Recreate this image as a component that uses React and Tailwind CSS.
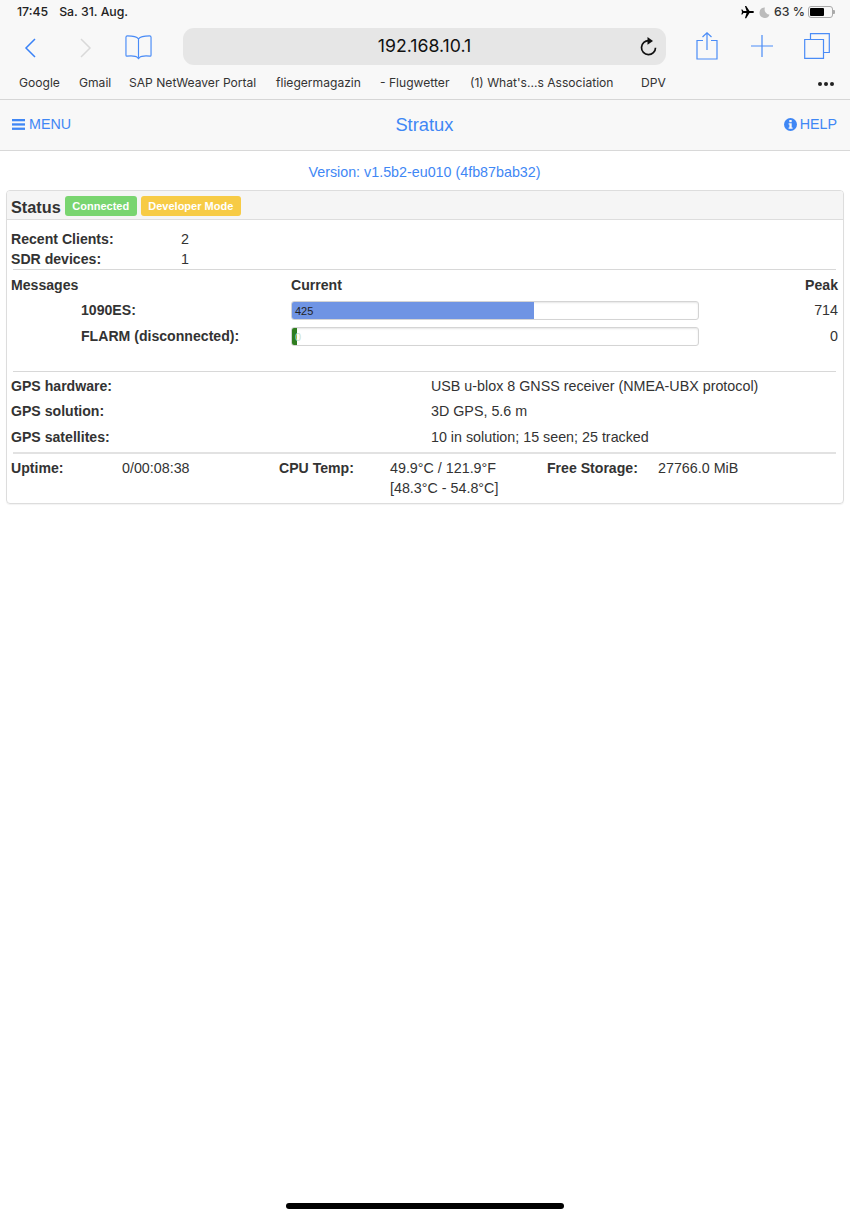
const bookmarks = [
  { label: "Google", w: "w-[39px]", ml: "ml-[19px]" },
  { label: "Gmail", w: "w-[31px]", ml: "ml-[21px]" },
  { label: "SAP NetWeaver Portal", w: "w-[128px]", ml: "ml-[19px]" },
  { label: "fliegermagazin", w: "w-[85px]", ml: "ml-[19px]" },
  { label: "- Flugwetter", w: "w-[71px]", ml: "ml-[19px]" },
  { label: "(1) What's...s Association", w: "w-[144px]", ml: "ml-[19px]" },
  { label: "DPV", w: "w-[24px]", ml: "ml-[27px]" },
];

function Bar({ fill, label, labelClass, width }) {
  return (
    <div className="relative w-[408px] h-[19px] bg-white border border-[#d4d4d4] rounded-[3px] shadow-[inset_0_1px_2px_rgba(0,0,0,0.1)] overflow-hidden">
      <div className={`h-full ${fill}`} style={{ width }} />
      <span className={`absolute left-[3px] top-[1px] text-[11px] leading-[16px] ${labelClass}`}>{label}</span>
    </div>
  );
}

export default function App() {
  return (
    <div className="w-[850px] h-[1217px] bg-white text-[#333] text-[14.3px] leading-[20px] relative overflow-hidden font-['Liberation_Sans',sans-serif]">
      {/* Safari chrome */}
      <div className="h-[100px] bg-[#f8f8f8] border-b border-[#d6d6d6] font-['Inter',sans-serif]">
        <div className="h-[26px] flex items-center pl-[17px] pr-[17px] pb-[2px] text-[12.300px] font-medium text-[#222]">
          <span>17:45</span>
          <span className="ml-[11px]">Sa. 31. Aug.</span>
          <div className="ml-auto flex items-center">
            <svg width="15" height="14" viewBox="0 0 24 24" fill="#000">
              <path d="M23 12c0-1-1-1.700-2.300-1.700h-5.300L9.800 1.500H7.600l2.800 8.800H5L3.200 7.800H1.400L2.600 12 1.400 16.200h1.800L5 13.700h5.400l-2.800 8.800h2.200l5.600-8.800h5.300C22 13.700 23 13 23 12z" />
            </svg>
            <svg className="ml-[4px]" width="11" height="11" viewBox="0 0 12 12" fill="#bbb">
              <path d="M6.500.5A5.700 5.700 0 1 0 11.500 8.500 6 6 0 0 1 6.500.5z" />
            </svg>
            <span className="ml-[4px] text-[#333] w-[30px] whitespace-nowrap">63 %</span>
            <div className="ml-[4px] w-[25px] h-[12px] border border-[#aaa] rounded-[3px] p-[1px] relative">
              <div className="w-[14px] h-full bg-black rounded-[1px]" />
              <div className="absolute -right-[3px] top-[3px] w-[2px] h-[4px] bg-[#aaa] rounded-r-[1px]" />
            </div>
          </div>
        </div>

        <div className="h-[40px] flex items-center relative">
          <svg className="ml-[24px] mt-[4px]" width="14" height="22" viewBox="0 0 14 22" fill="none" stroke="#3a82f7" strokeWidth="1.500">
            <path d="M11 2 2 11l9 9" />
          </svg>
          <svg className="ml-[40px] mt-[4px]" width="14" height="22" viewBox="0 0 14 22" fill="none" stroke="#d9d9d9" strokeWidth="1.500">
            <path d="M3 2l9 9-9 9" />
          </svg>
          <svg className="ml-[33px] mt-[2px]" width="27" height="26" viewBox="0 0 28 26" fill="none" stroke="#4a8cf7" strokeWidth="1.200">
            <path d="M14 4.500C12 2 8 1.500 2.500 1.500c-1 0-1.500.5-1.500 1.500v18.500c0 .7.400 1 1 1C7 22 11 22 13 24l1 1 1-1c2-2 6-2 11-1.500.6 0 1-.3 1-1V3c0-1-.5-1.500-1.500-1.500C20 1.500 16 2 14 4.500zM14 4.500V24" />
          </svg>
          <div className="ml-[31px] w-[483px] h-[37px] rounded-[11px] bg-[#e6e6e6] flex items-center justify-center relative">
            <span className="text-[17.700px] text-[#111]">192.168.10.1</span>
            <svg className="absolute right-[8px] top-[8px]" width="20" height="21" viewBox="0 0 20 21" fill="none" stroke="#111" strokeWidth="1.700">
              <path d="M11 4.700a7 7 0 1 0 6.500 7" />
              <path d="M9.500 1 15 5l-5.500 3.800z" fill="#111" stroke="none" />
            </svg>
          </div>
          <svg className="ml-[30px]" width="22" height="28" viewBox="0 0 22 28" fill="none" stroke="#4a8cf7" strokeWidth="1.200">
            <path d="M7 8.500H1v18.500h20V8.500h-6M11 18V1M6.500 5 11 .8 15.500 5" />
          </svg>
          <svg className="ml-[33px]" width="22" height="22" viewBox="0 0 22 22" fill="none" stroke="#4a8cf7" strokeWidth="1.200">
            <path d="M0 11h22M11 0v22" />
          </svg>
          <svg className="ml-[31px]" width="26" height="26" viewBox="0 0 26 26" fill="none" stroke="#4a8cf7" strokeWidth="1.200">
            <path d="M.7 6.500h18.800v18.800H.7zM6.500 6V.7h18.800v18.800H20" />
          </svg>
        </div>

        <div className="h-[33px] pt-[1px] flex items-center text-[12.100px] text-[#333] relative">
          {bookmarks.map((b) => (
            <span key={b.label} className={`${b.w} ${b.ml} whitespace-nowrap`}>{b.label}</span>
          ))}
          <div className="absolute left-[818px] top-[16px] flex gap-[2px]">
            <i className="block w-[4px] h-[4px] rounded-full bg-[#222]" />
            <i className="block w-[4px] h-[4px] rounded-full bg-[#222]" />
            <i className="block w-[4px] h-[4px] rounded-full bg-[#222]" />
          </div>
        </div>
      </div>

      {/* Navbar */}
      <div className="h-[51px] bg-[#f8f8f8] border-b border-[#d8d8d8] flex items-center justify-between pl-[12px] pr-[13px] text-[#3f87f5]">
        <div className="flex items-center mb-[2px]">
          <svg width="13" height="11" viewBox="0 0 13 11" fill="#3f87f5">
            <rect y="0" width="13" height="2.300" />
            <rect y="4.300" width="13" height="2.300" />
            <rect y="8.600" width="13" height="2.300" />
          </svg>
          <span className="ml-[4px]">MENU</span>
        </div>
        <span className="text-[18.300px] mr-[6px]">Stratux</span>
        <div className="flex items-center mb-[2px]">
          <svg width="13" height="13" viewBox="0 0 13 13">
            <circle cx="6.500" cy="6.500" r="6.500" fill="#3f87f5" />
            <rect x="5.300" y="2" width="2.400" height="2.200" fill="#f8f8f8" />
            <path d="M4.600 5.300h3.100v4.200h.9v1.200H4.600V9.500h.8V6.500h-.8z" fill="#f8f8f8" />
          </svg>
          <span className="ml-[3px]">HELP</span>
        </div>
      </div>

      <div className="h-[39px] pt-[11px] text-center text-[#3f87f5] ml-[-1px]">Version: v1.5b2-eu010 (4fb87bab32)</div>

      {/* Status panel */}
      <div className="mx-[6px] h-[314px] border border-[#ddd] rounded-[4px] shadow-[0_1px_1px_rgba(0,0,0,0.05)]">
        <div className="h-[29px] bg-[#f5f5f5] border-b border-[#ddd] rounded-t-[3px] flex items-center pl-[4px]">
          <span className="text-[16.300px] font-bold mt-[3px]">Status</span>
          <span className="ml-[4px] mt-[2px] h-[20px] w-[72px] rounded-[3px] bg-[#79d570] text-white text-[11px] font-bold flex items-center justify-center">Connected</span>
          <span className="ml-[4px] mt-[2px] h-[20px] w-[100px] rounded-[3px] bg-[#f7cb45] text-white text-[11px] font-bold flex items-center justify-center">Developer Mode</span>
        </div>

        <div className="pt-[9px] px-[4px]">
          <div className="flex h-[20px]">
            <b className="w-[170px] text-[14.100px]">Recent Clients:</b>
            <span>2</span>
          </div>
          <div className="flex h-[20px]">
            <b className="w-[170px] text-[14.100px]">SDR devices:</b>
            <span>1</span>
          </div>
        </div>
        <div className="h-px bg-[#d8d8d8] ml-[6px] mr-[7px]" />

        <div className="pl-[4px] pr-[5px]">
          <div className="flex h-[30px] items-center font-bold text-[14.100px]">
            <span className="w-[280px]">Messages</span>
            <span>Current</span>
            <span className="ml-auto">Peak</span>
          </div>
          <div className="flex h-[20px] items-center">
            <b className="w-[280px] pl-[70px] text-[14.100px]">1090ES:</b>
            <Bar fill="bg-[#6f94e4]" label="425" labelClass="text-[#222]" width="242px" />
            <span className="ml-auto">714</span>
          </div>
          <div className="flex h-[20px] items-center mt-[6px]">
            <b className="w-[280px] pl-[70px] text-[14.100px] whitespace-nowrap">FLARM (disconnected):</b>
            <Bar fill="bg-[#2f7d1f]" label="0" labelClass="text-[#cfe3c8]" width="5px" />
            <span className="ml-auto">0</span>
          </div>
        </div>

        <div className="h-px bg-[#d8d8d8] ml-[6px] mr-[7px] mt-[25px]" />
        <div className="px-[4px] pt-[1px]">
          <div className="flex h-[25.500px] items-center">
            <b className="w-[420px] text-[14.100px]">GPS hardware:</b>
            <span>USB u-blox 8 GNSS receiver (NMEA-UBX protocol)</span>
          </div>
          <div className="flex h-[25.500px] items-center">
            <b className="w-[420px] text-[14.100px]">GPS solution:</b>
            <span>3D GPS, 5.6 m</span>
          </div>
          <div className="flex h-[25.500px] items-center">
            <b className="w-[420px] text-[14.100px]">GPS satellites:</b>
            <span>10 in solution; 15 seen; 25 tracked</span>
          </div>
        </div>
        <div className="h-[2px] bg-[#e2e2e2] ml-[6px] mr-[7px] mt-[2px]" />

        <div className="grid grid-cols-[111px_157px_111px_157px_111px_1fr] px-[4px] pt-[4px]">
          <b className="text-[14.100px]">Uptime:</b>
          <span>0/00:08:38</span>
          <b className="text-[14.100px]">CPU Temp:</b>
          <span>
            49.9°C / 121.9°F
            <br />
            [48.3°C - 54.8°C]
          </span>
          <b className="text-[14.100px]">Free Storage:</b>
          <span>27766.0 MiB</span>
        </div>
      </div>

      {/* Home indicator */}
      <div className="absolute left-[286px] top-[1203px] w-[278px] h-[6px] rounded-full bg-black" />
    </div>
  );
}
